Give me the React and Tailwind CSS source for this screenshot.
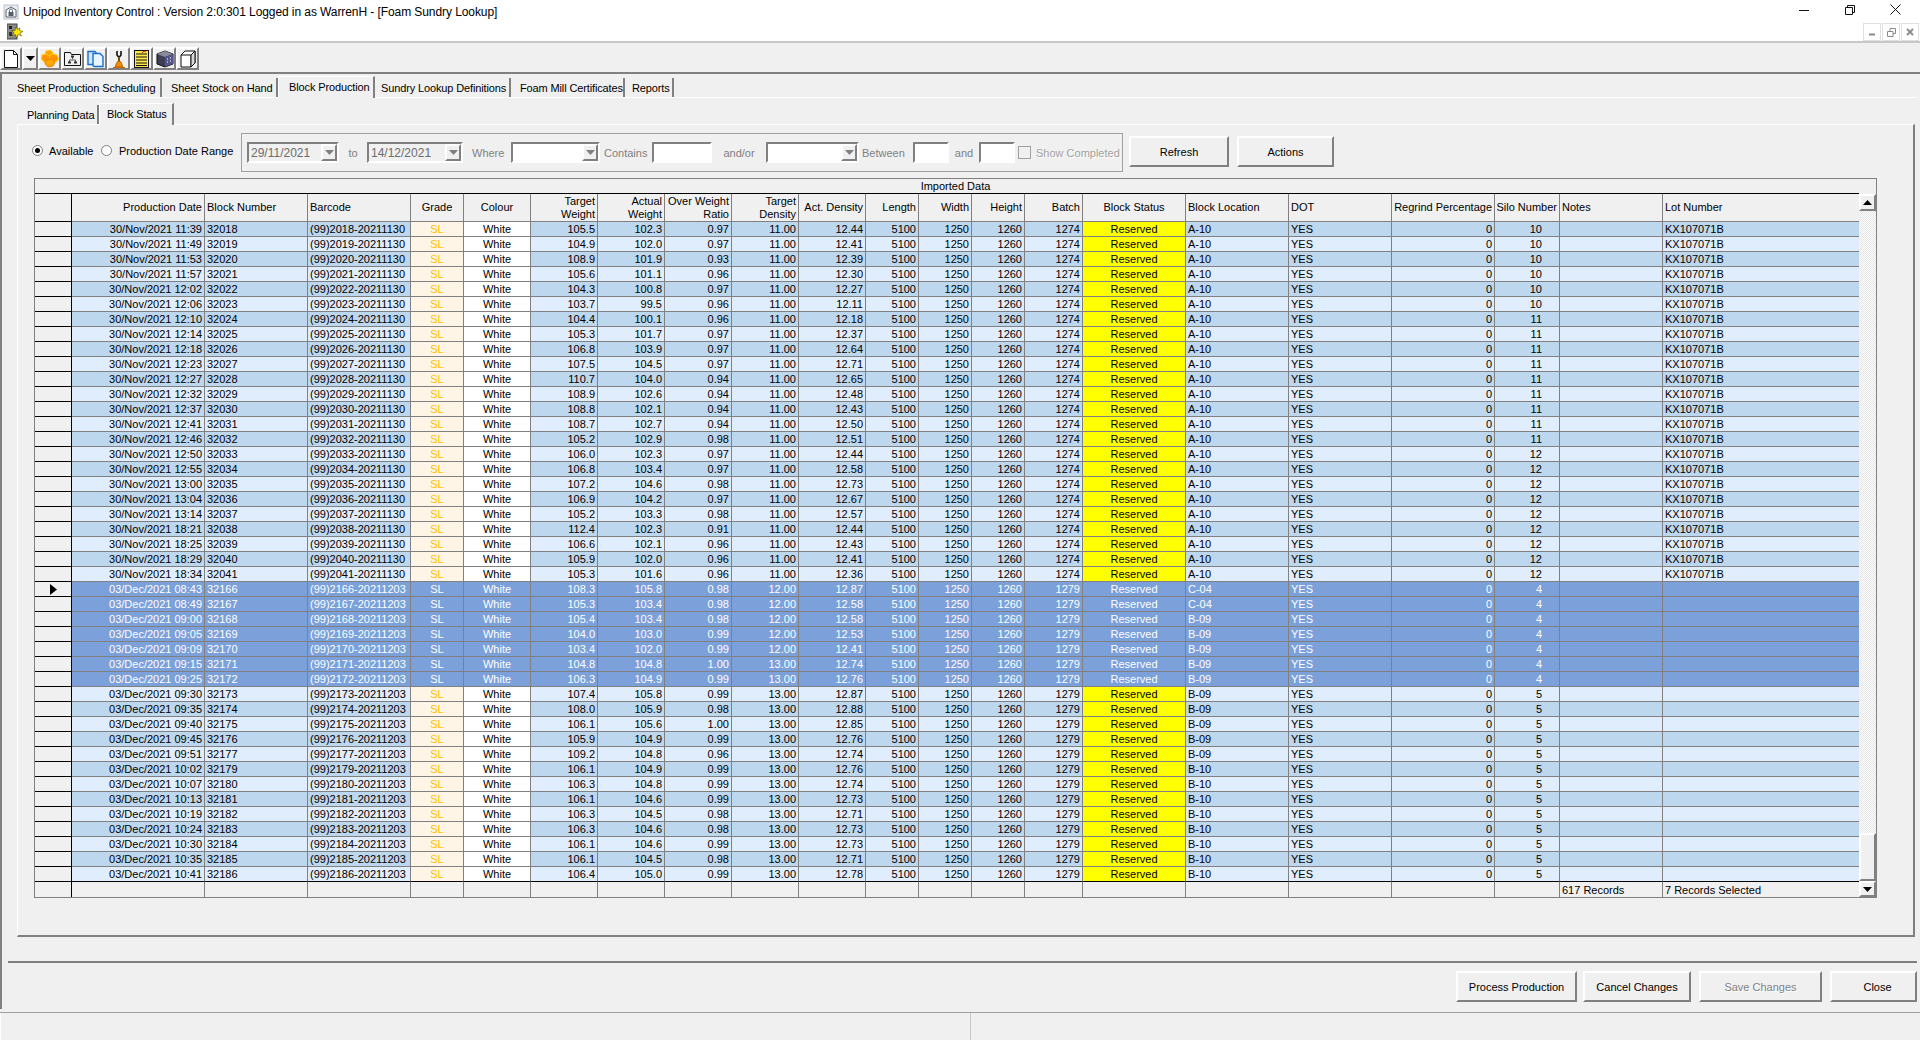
// App.jsx — Unipod Inventory Control, block status grid
import React from "react";

const BEVEL = "border-2 border-t-white border-l-white border-r-[#808080] border-b-[#808080]";
const SUNKEN = "border-2 border-t-[#808080] border-l-[#808080] border-r-white border-b-white";

const COLS = [
  { key: "date", label: "Production Date", w: "w-[133px]", align: "r" },
  { key: "block", label: "Block Number", w: "w-[103px]", align: "l" },
  { key: "barcode", label: "Barcode", w: "w-[103px]", align: "l" },
  { key: "grade", label: "Grade", w: "w-[53px]", align: "c" },
  { key: "colour", label: "Colour", w: "w-[67px]", align: "c" },
  { key: "tw", label: "Target\nWeight", w: "w-[67px]", align: "r" },
  { key: "aw", label: "Actual\nWeight", w: "w-[67px]", align: "r" },
  { key: "ratio", label: "Over Weight\nRatio", w: "w-[67px]", align: "r" },
  { key: "td", label: "Target\nDensity", w: "w-[67px]", align: "r" },
  { key: "ad", label: "Act. Density", w: "w-[67px]", align: "r" },
  { key: "length", label: "Length", w: "w-[53px]", align: "r" },
  { key: "width", label: "Width", w: "w-[53px]", align: "r" },
  { key: "height", label: "Height", w: "w-[53px]", align: "r" },
  { key: "batch", label: "Batch", w: "w-[58px]", align: "r" },
  { key: "status", label: "Block Status", w: "w-[103px]", align: "c" },
  { key: "location", label: "Block Location", w: "w-[103px]", align: "l" },
  { key: "dot", label: "DOT", w: "w-[103px]", align: "l" },
  { key: "regrind", label: "Regrind Percentage", w: "w-[103px]", align: "r" },
  { key: "silo", label: "Silo Number", w: "w-[65px]", align: "r" },
  { key: "notes", label: "Notes", w: "w-[103px]", align: "l" },
  { key: "lot", label: "Lot Number", w: "w-[196px]", align: "l", last: true },
];

const ALIGN = {
  l: "justify-start text-left",
  r: "justify-end text-right",
  c: "justify-center text-center",
};

// time, block, target weight, actual weight, ratio, act. density
const NOV = [
  ["11:39", "32018", "105.5", "102.3", "0.97", "12.44"],
  ["11:49", "32019", "104.9", "102.0", "0.97", "12.41"],
  ["11:53", "32020", "108.9", "101.9", "0.93", "12.39"],
  ["11:57", "32021", "105.6", "101.1", "0.96", "12.30"],
  ["12:02", "32022", "104.3", "100.8", "0.97", "12.27"],
  ["12:06", "32023", "103.7", "99.5", "0.96", "12.11"],
  ["12:10", "32024", "104.4", "100.1", "0.96", "12.18"],
  ["12:14", "32025", "105.3", "101.7", "0.97", "12.37"],
  ["12:18", "32026", "106.8", "103.9", "0.97", "12.64"],
  ["12:23", "32027", "107.5", "104.5", "0.97", "12.71"],
  ["12:27", "32028", "110.7", "104.0", "0.94", "12.65"],
  ["12:32", "32029", "108.9", "102.6", "0.94", "12.48"],
  ["12:37", "32030", "108.8", "102.1", "0.94", "12.43"],
  ["12:41", "32031", "108.7", "102.7", "0.94", "12.50"],
  ["12:46", "32032", "105.2", "102.9", "0.98", "12.51"],
  ["12:50", "32033", "106.0", "102.3", "0.97", "12.44"],
  ["12:55", "32034", "106.8", "103.4", "0.97", "12.58"],
  ["13:00", "32035", "107.2", "104.6", "0.98", "12.73"],
  ["13:04", "32036", "106.9", "104.2", "0.97", "12.67"],
  ["13:14", "32037", "105.2", "103.3", "0.98", "12.57"],
  ["18:21", "32038", "112.4", "102.3", "0.91", "12.44"],
  ["18:25", "32039", "106.6", "102.1", "0.96", "12.43"],
  ["18:29", "32040", "105.9", "102.0", "0.96", "12.41"],
  ["18:34", "32041", "105.3", "101.6", "0.96", "12.36"],
];

const DEC = [
  ["08:43", "32166", "108.3", "105.8", "0.98", "12.87"],
  ["08:49", "32167", "105.3", "103.4", "0.98", "12.58"],
  ["09:00", "32168", "105.4", "103.4", "0.98", "12.58"],
  ["09:05", "32169", "104.0", "103.0", "0.99", "12.53"],
  ["09:09", "32170", "103.4", "102.0", "0.99", "12.41"],
  ["09:15", "32171", "104.8", "104.8", "1.00", "12.74"],
  ["09:25", "32172", "106.3", "104.9", "0.99", "12.76"],
  ["09:30", "32173", "107.4", "105.8", "0.99", "12.87"],
  ["09:35", "32174", "108.0", "105.9", "0.98", "12.88"],
  ["09:40", "32175", "106.1", "105.6", "1.00", "12.85"],
  ["09:45", "32176", "105.9", "104.9", "0.99", "12.76"],
  ["09:51", "32177", "109.2", "104.8", "0.96", "12.74"],
  ["10:02", "32179", "106.1", "104.9", "0.99", "12.76"],
  ["10:07", "32180", "106.3", "104.8", "0.99", "12.74"],
  ["10:13", "32181", "106.1", "104.6", "0.99", "12.73"],
  ["10:19", "32182", "106.3", "104.5", "0.98", "12.71"],
  ["10:24", "32183", "106.3", "104.6", "0.98", "12.73"],
  ["10:30", "32184", "106.1", "104.6", "0.99", "12.73"],
  ["10:35", "32185", "106.1", "104.5", "0.98", "12.71"],
  ["10:41", "32186", "106.4", "105.0", "0.99", "12.78"],
];

function decLocation(block) {
  const n = Number(block);
  if (n <= 32167) return "C-04";
  if (n <= 32177) return "B-09";
  return "B-10";
}

const ROWS = [
  ...NOV.map(([time, block, tw, aw, ratio, ad]) => ({
    date: `30/Nov/2021 ${time}`, block, barcode: `(99)${block.slice(1)}-20211130`,
    tw, aw, ratio, ad, td: "11.00", batch: "1274", location: "A-10",
    silo: block <= "32023" ? "10" : block <= "32032" ? "11" : "12", lot: "KX107071B",
  })),
  ...DEC.map(([time, block, tw, aw, ratio, ad]) => ({
    date: `03/Dec/2021 ${time}`, block, barcode: `(99)${block.slice(1)}-20211203`,
    tw, aw, ratio, ad, td: block <= "32170" ? "12.00" : "13.00", batch: "1279",
    location: decLocation(block), silo: block <= "32172" ? "4" : "5", lot: "",
    selected: block <= "32172",
  })),
].map((r) => ({
  ...r, grade: "SL", colour: "White", length: "5100", width: "1250", height: "1260",
  status: "Reserved", dot: "YES", regrind: "0", notes: "",
}));

function cellColour(key, row, index) {
  if (row.selected) return "bg-[#7ba0da] text-white";
  if (key === "grade") return "bg-[#fff5e6] text-[#ffc000]";
  if (key === "colour") return "bg-white text-black";
  if (key === "status") return "bg-[#ffff00] text-black";
  return index % 2 === 0 ? "bg-[#bdd7ee] text-black" : "bg-[#e0edfc] text-black";
}

function Arrow({ className = "", fill = "#808080" }) {
  return (
    <svg width="9" height="5" viewBox="0 0 9 5" className={className}>
      <polygon points="0,0 9,0 4.5,5" fill={fill} />
    </svg>
  );
}

function Combo({ w, value, bg }) {
  return (
    <div className={`${w} h-[21px] ${SUNKEN} ${bg} flex items-center justify-between shrink-0`}>
      <span className="pl-[2px] text-[#6d6d6d] text-[12px]">{value}</span>
      <span className={`w-[16px] h-[17px] bg-[#f0f0f0] ${BEVEL} flex items-center justify-center`}>
        <Arrow />
      </span>
    </div>
  );
}

function Tab({ w, label, selected, pl }) {
  return (
    <div
      className={`${w} ${pl} shrink-0 flex items-center whitespace-nowrap tracking-[-0.13px] bg-[#f0f0f0] ${
        selected
          ? "h-[22px] -mb-px relative z-10 border-t border-l border-r-2 border-t-white border-l-white border-r-[#808080] pb-[2px]"
          : "h-[19px] border-r-2 border-r-[#808080]"
      }`}
    >
      {label}
    </div>
  );
}

function ToolBtn({ w = "w-[23px]", children }) {
  return (
    <div className={`${w} h-[23px] ${BEVEL} flex items-center justify-center shrink-0`}>{children}</div>
  );
}

function Btn({ w, label, disabled, pad }) {
  return (
    <div
      className={`${w} h-[31px] ${pad || ""} ${BEVEL} shrink-0 flex items-center justify-center ${
        disabled ? "text-[#808080] [text-shadow:1px_1px_0_#fff]" : "text-black"
      }`}
    >
      {label}
    </div>
  );
}

function AppIcon() {
  return (
    <svg width="16" height="16" viewBox="0 0 16 16">
      <rect x="1" y="1" width="14" height="14" fill="#e8ebf0" stroke="#b9c0ca" />
      <path d="M3 13V6l5-3 5 3v7z" fill="#fff" stroke="#56606e" />
      <rect x="5.5" y="8" width="5" height="4" fill="#56606e" />
      <path d="M6.5 8V6.5a1.5 1.5 0 013 0V8" fill="none" stroke="#56606e" />
    </svg>
  );
}

function ChildIcon() {
  return (
    <svg width="16" height="17" viewBox="0 0 16 17">
      <rect x="0" y="1" width="10" height="15" fill="#8a8a8a" stroke="#444" />
      <rect x="2" y="3" width="3" height="3" fill="#222" />
      <rect x="2" y="9" width="3" height="4" fill="#333" />
      <polygon points="9,4 10.5,6.5 13,5 12.5,7.5 16,8.5 13,10 14.5,13 11,11.5 9.5,15 8.5,11.5 5,12.5 7,9.5 4.5,7.5 8,7.5" fill="#ffe600" stroke="#3a3a00" strokeWidth="0.5" />
    </svg>
  );
}

const ICONS = [
  <svg key="new" width="14" height="18" viewBox="0 0 14 18">
    <path d="M.5.5h9l4 4v13H.5z" fill="#fff" stroke="#111" />
    <path d="M9.5.5v4h4" fill="none" stroke="#111" />
  </svg>,
  <svg key="blob" width="18" height="18" viewBox="0 0 18 18">
    <polygon points="5,1 10,0.500 12,3 11,7 6,8 4,5" fill="#ffa000" stroke="#ffc800" />
    <polygon points="1,5 6,4 9,7 8,11 3,12 0.500,9" fill="#ff9400" stroke="#ffc800" />
    <polygon points="10,4 16,5 17.500,9 15,12 10,11 8.500,7" fill="#ff9400" stroke="#ffc800" />
    <polygon points="5,10 11,9 14,12 12,16 7,17 4,14" fill="#ffa600" stroke="#e88400" />
  </svg>,
  <svg key="folder" width="17" height="14" viewBox="0 0 17 14">
    <path d="M.5 13.5V.5h6l1 2h9v11z" fill="#f0f0f0" stroke="#111" />
    <path d="M8.5 5v2M5.5 10V8h6v2" fill="none" stroke="#555" />
    <rect x="7" y="3.5" width="3" height="2" fill="#333" />
    <rect x="4" y="9.5" width="3" height="2" fill="#333" />
    <rect x="10" y="9.5" width="3" height="2" fill="#333" />
  </svg>,
  <svg key="copies" width="17" height="19" viewBox="0 0 17 19">
    <path d="M1 2.5h7l1 1v12H1z" fill="#cfe8ff" stroke="#1b6fd0" strokeWidth="1.4" />
    <path d="M6 4.5h7l3 3v10H7l-1-1z" fill="#e8f5ff" stroke="#1b6fd0" strokeWidth="1.4" />
  </svg>,
  <svg key="figure" width="14" height="18" viewBox="0 0 14 18">
    <path d="M5 1v4l1.500 2h1L9 5V1" fill="none" stroke="#111" strokeWidth="1.600" />
    <path d="M6 7h2v4H6z" fill="#7a4a10" />
    <path d="M3 17l1.500-4 1.500-2h2l1.500 2 1.500 4z" fill="#f08a00" stroke="#8a4a00" strokeWidth="0.600" />
    <path d="M1 17.500h12" stroke="#c96a00" />
  </svg>,
  <svg key="list" width="15" height="18" viewBox="0 0 15 18">
    <rect x="0.500" y="0.500" width="14" height="17" fill="#ffe94a" stroke="#111" />
    <path d="M2 4h11M2 7h11M2 10h11M2 13h11M2 15.500h11" stroke="#111" />
    <path d="M8 3l2-2 2 1" fill="none" stroke="#e01b1b" />
  </svg>,
  <svg key="cube" width="18" height="18" viewBox="0 0 18 18">
    <polygon points="9,1 17,4 17,14 9,17 1,14 1,4" fill="#3d3d55" stroke="#111" />
    <polygon points="9,1 17,4 9,7 1,4" fill="#8a8a9a" />
    <polygon points="9,7 17,4 17,14 9,17" fill="#55558a" />
    <path d="M11 9h1M14 8h1M11 12h1M14 11h1" stroke="#c8c8e8" strokeWidth="1.500" />
  </svg>,
  <svg key="box" width="16" height="18" viewBox="0 0 16 18">
    <polygon points="1,5 5,1 15,1 15,13 11,17 1,17" fill="#fff" stroke="#111" />
    <path d="M1 5h10v12M11 5l4-4" fill="none" stroke="#111" />
    <polygon points="11,5 15,1 15,13 11,17" fill="#d8d8d8" stroke="#111" />
  </svg>,
];

function MdiBtn({ children }) {
  return (
    <div className="w-[18px] h-[18px] border border-[#e0e0e0] flex items-center justify-center">{children}</div>
  );
}

function DataGrid() {
  return (
    <div className="ml-[16px] mt-[6px] w-[1843px] h-[720px] border border-[#808080] bg-[#f0f0f0] flex flex-col">
      <div className="h-[14px] flex items-center justify-center">Imported Data</div>
      <div className="flex flex-1 min-h-0">
        <div className="w-[1824px] flex flex-col">
          {/* Column headers */}
          <div className="flex h-[29px] border-t border-t-black">
            <div className="w-[37px] border-r border-b border-r-black border-b-black" />
            {COLS.map((c) => (
              <div
                key={c.key}
                className={`${c.w} flex items-center px-[2px] leading-[13px] whitespace-pre border-b border-b-[#808080] ${
                  c.last ? "" : "border-r border-r-[#808080]"
                } ${ALIGN[c.align]}`}
              >
                {c.label}
              </div>
            ))}
          </div>
          {/* Rows */}
          {ROWS.map((row, i) => {
            const lastRow = i === ROWS.length - 1;
            return (
              <div key={row.block} className="flex h-[15px]">
                <div className="w-[37px] flex items-center justify-center border-r border-b border-r-black border-b-black">
                  {i === 24 && (
                    <svg width="7" height="11" viewBox="0 0 7 11">
                      <polygon points="0,0 7,5.500 0,11" fill="#000" />
                    </svg>
                  )}
                </div>
                {COLS.map((c) => (
                  <div
                    key={c.key}
                    className={`${c.w} flex items-center px-[2px] whitespace-nowrap border-b ${
                      lastRow ? "border-b-black" : "border-b-[#808080]"
                    } ${c.last ? "" : "border-r border-r-[#808080]"} ${ALIGN[c.align]} ${
                      c.key === "silo" ? "pr-[17px]" : ""
                    } ${cellColour(c.key, row, i)}`}
                  >
                    {row[c.key]}
                  </div>
                ))}
              </div>
            );
          })}
          {/* Footer */}
          <div className="flex flex-1">
            <div className="w-[37px] border-r border-r-black" />
            {COLS.map((c) => (
              <div
                key={c.key}
                className={`${c.w} flex items-center px-[2px] whitespace-nowrap ${c.last ? "" : "border-r border-r-[#808080]"}`}
              >
                {c.key === "notes" ? "617 Records" : c.key === "lot" ? "7 Records Selected" : ""}
              </div>
            ))}
          </div>
        </div>
        {/* Scrollbar */}
        <div className="w-[17px] pt-px flex flex-col">
          <div className={`h-[17px] ${BEVEL} flex items-center justify-center bg-[#f0f0f0]`}>
            <Arrow fill="#000" className="rotate-180" />
          </div>
          <div className="flex-1 bg-[repeating-conic-gradient(#ffffff_0_25%,#e4e4e4_0_50%)] bg-[length:2px_2px]" />
          <div className={`h-[48px] ${BEVEL} bg-[#f0f0f0]`} />
          <div className={`h-[16px] ${BEVEL} flex items-center justify-center bg-[#f0f0f0]`}>
            <Arrow fill="#000" />
          </div>
        </div>
      </div>
    </div>
  );
}

export default function App() {
  return (
    <div className="w-[1920px] h-[1040px] overflow-hidden bg-[#f0f0f0] text-black text-[11px] leading-[14px] font-['Liberation_Sans',sans-serif] flex flex-col">
      {/* Title bar */}
      <div className="h-[43px] bg-white border-b-2 border-b-[#c8c8c8] shrink-0 flex flex-col">
        <div className="h-[24px] flex items-center">
          <div className="ml-[3px] w-[20px] shrink-0"><AppIcon /></div>
          <div className="flex-1 text-[12px] tracking-[-0.08px] whitespace-nowrap">
            Unipod Inventory Control : Version 2:0:301 Logged in as WarrenH - [Foam Sundry Lookup]
          </div>
          <div className="flex mr-[2px] -mt-[4px]">
            <div className="w-[46px] h-[20px] flex items-center justify-center">
              <svg width="10" height="10" viewBox="0 0 10 10"><path d="M0 5.500h10" stroke="#111" /></svg>
            </div>
            <div className="w-[45px] h-[20px] flex items-center justify-center">
              <svg width="10" height="10" viewBox="0 0 10 10" fill="none" stroke="#111">
                <path d="M.5 2.500h7v7h-7zM2.500 2.500v-2h7v7h-2" />
              </svg>
            </div>
            <div className="w-[46px] h-[20px] flex items-center justify-center">
              <svg width="11" height="11" viewBox="0 0 11 11" fill="none" stroke="#111">
                <path d="M.5.5l10 10M10.500.5l-10 10" />
              </svg>
            </div>
          </div>
        </div>
        <div className="flex-1 flex items-start justify-between">
          <div className="ml-[7px]"><ChildIcon /></div>
          <div className="flex gap-px mr-px">
            <MdiBtn>
              <svg width="8" height="8" viewBox="0 0 8 8"><path d="M1 6.500h6" stroke="#8a8a8a" strokeWidth="2" /></svg>
            </MdiBtn>
            <MdiBtn>
              <svg width="9" height="9" viewBox="0 0 9 9" fill="none" stroke="#8a8a8a">
                <path d="M.5 3.500h5.500v5H.5zM3 3V.5h5.500v5H6" />
              </svg>
            </MdiBtn>
            <MdiBtn>
              <svg width="8" height="8" viewBox="0 0 8 8" fill="none" stroke="#8a8a8a" strokeWidth="1.800">
                <path d="M1 1l6 6M7 1L1 7" />
              </svg>
            </MdiBtn>
          </div>
        </div>
      </div>

      {/* Toolbar */}
      <div className="h-[29px] shrink-0 pt-[4px] flex">
        <ToolBtn w="w-[22px]">{ICONS[0]}</ToolBtn>
        <ToolBtn w="w-[16px]"><Arrow fill="#000" /></ToolBtn>
        {ICONS.slice(1).map((icon) => (
          <ToolBtn key={icon.key}>{icon}</ToolBtn>
        ))}
      </div>

      {/* Main area */}
      <div className="h-[937px] shrink-0 border-l-2 border-t-2 border-l-[#808080] border-t-[#808080] pl-[6px] pt-[2px] flex flex-col">
        <div className="h-[21px] flex items-end shrink-0">
          <Tab w="w-[154px]" pl="pl-[9px]" label="Sheet Production Scheduling" />
          <Tab w="w-[116px]" pl="pl-[9px]" label="Sheet Stock on Hand" />
          <Tab w="w-[97px]" pl="pl-[10px]" label="Block Production" selected />
          <Tab w="w-[136px]" pl="pl-[6px]" label="Sundry Lookup Definitions" />
          <Tab w="w-[114px]" pl="pl-[9px]" label="Foam Mill Certificates" />
          <Tab w="w-[49px]" pl="pl-[7px]" label="Reports" />
        </div>
        <div className="w-[1909px] h-[866px] shrink-0 border-t border-b-2 border-t-white border-b-[#808080] pl-[9px] pt-[5px] flex flex-col">
          <div className="h-[21px] flex items-end shrink-0 pl-[2px]">
            <Tab w="w-[80px]" pl="pl-[8px]" label="Planning Data" />
            <Tab w="w-[75px]" pl="pl-[7px]" label="Block Status" selected />
          </div>
          <div className="w-[1898px] h-[813px] shrink-0 border-t border-l border-r-2 border-b-2 border-t-white border-l-white border-r-[#808080] border-b-[#808080] pt-[8px] flex flex-col">
            {/* Filter row */}
            <div className="flex items-start h-[39px] shrink-0">
              <div className="w-[223px] pl-[14px] h-[35px] flex items-center shrink-0">
                <span className="w-[11px] h-[11px] rounded-full border border-[#808080] bg-white flex items-center justify-center">
                  <span className="w-[5px] h-[5px] rounded-full bg-black" />
                </span>
                <span className="ml-[6px] w-[52px]">Available</span>
                <span className="w-[11px] h-[11px] rounded-full border border-[#808080] bg-white" />
                <span className="ml-[7px] whitespace-nowrap">Production Date Range</span>
              </div>
              <div className="w-[882px] h-[39px] shrink-0 border border-[#a0a0a0] pl-[5px] flex items-center text-[#808080] whitespace-nowrap">
                <Combo w="w-[92px]" value="29/11/2021" bg="bg-[#f0f0f0]" />
                <span className="w-[28px] text-center shrink-0">to</span>
                <Combo w="w-[96px]" value="14/12/2021" bg="bg-[#f0f0f0]" />
                <span className="w-[48px] pl-[9px] shrink-0">Where</span>
                <Combo w="w-[89px]" value="" bg="bg-white" />
                <span className="w-[52px] pl-[4px] shrink-0">Contains</span>
                <div className={`w-[60px] h-[21px] bg-white shrink-0 ${SUNKEN}`} />
                <span className="w-[54px] text-center shrink-0">and/or</span>
                <Combo w="w-[93px]" value="" bg="bg-white" />
                <span className="w-[54px] pl-[3px] shrink-0">Between</span>
                <div className={`w-[36px] h-[21px] bg-white shrink-0 ${SUNKEN}`} />
                <span className="w-[30px] text-center shrink-0">and</span>
                <div className={`w-[36px] h-[21px] bg-white shrink-0 ${SUNKEN}`} />
                <span className="ml-[3px] w-[13px] h-[13px] border border-[#a0a0a0] bg-[#f0f0f0] shrink-0" />
                <span className="ml-[5px] text-[#a0a0a0] [text-shadow:1px_1px_0_#fff]">Show Completed</span>
              </div>
              <div className="ml-[6px] mt-[3px]"><Btn w="w-[100px]" label="Refresh" /></div>
              <div className="ml-[8px] mt-[3px]"><Btn w="w-[97px]" label="Actions" /></div>
            </div>
            <DataGrid />
          </div>
        </div>
        {/* Bottom buttons */}
        <div className="w-[1909px] pt-[8px] flex justify-end shrink-0">
          <Btn w="w-[121px]" label="Process Production" />
          <div className="ml-[6px]"><Btn w="w-[108px]" label="Cancel Changes" /></div>
          <div className="ml-[8px]"><Btn w="w-[123px]" label="Save Changes" disabled /></div>
          <div className="ml-[8px]"><Btn w="w-[87px]" pad="pl-[8px]" label="Close" /></div>
        </div>
      </div>

      {/* Status bar */}
      <div className="flex-1 mt-[3px] border-t border-t-[#a0a0a0] flex">
        <div className="w-[971px] border-l border-r border-l-white border-r-[#c8c8c8]" />
        <div className="flex-1" />
      </div>
    </div>
  );
}
